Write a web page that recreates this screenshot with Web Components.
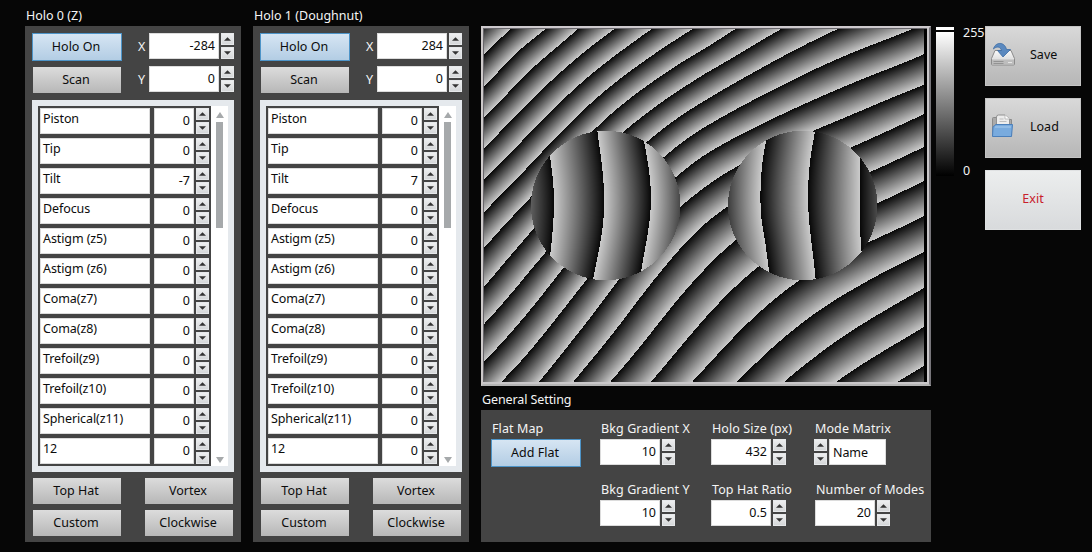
<!DOCTYPE html>
<html lang="en">
<head>
<meta charset="utf-8">
<title>Hologram control</title>
<style>
html,body{margin:0;height:100%;background:#060606;overflow:hidden}
body{font:12.5px/16px "Noto Sans","Open Sans",sans-serif;color:#f4f4f4}
</style>
</head>
<body>
<holo-app></holo-app>
<script>
const define = (name, html, setup) => customElements.define(name, class extends HTMLElement {
  connectedCallback() {
    if (this.shadowRoot) return;
    const t = document.createElement('template');
    t.innerHTML = typeof html === 'function' ? html(this) : html;
    this.attachShadow({mode: 'open'}).append(t.content.cloneNode(true));
    if (setup) setup(this, this.shadowRoot);
  }
});

define('ui-spin', `<style>
:host{display:grid;grid-template-rows:12px 12px;gap:2px;width:13px;height:26px;flex:none}
span{background:linear-gradient(#f0f1f2,#d3d5d7);display:grid;place-items:center;box-shadow:inset 0 0 0 1px #e6e8ea}
svg{display:block}
</style>
<span><svg width="7" height="4"><path d="M0 3.8 3.5.2 7 3.8z" fill="#333"/></svg></span>
<span><svg width="7" height="4"><path d="M0 .2 3.5 3.8 7 .2z" fill="#333"/></svg></span>`);

define('ui-box', `<style>
:host{display:flex;align-items:center;justify-content:flex-end;box-sizing:border-box;height:26px;padding:0 3px 1px 2px;background:#fff;color:#0c0c0c;border:1px solid #dcdcdc;white-space:nowrap}
:host([left]){justify-content:flex-start;padding:0 2px 5px;letter-spacing:-.1px}
:host([value]){padding:0 3px 0 0}
</style><slot></slot>`);

define('ui-number', `<style>
:host{display:flex;gap:2px}
ui-box{width:var(--w,60px)}
</style><ui-box><slot></slot></ui-box><ui-spin></ui-spin>`);

define('ui-button', `<style>
:host{display:flex;align-items:center;justify-content:center;box-sizing:border-box;width:88px;height:26px;margin:0 1px;padding-right:2px;background:linear-gradient(#dcdcdc,#b7b7b7);color:#0c0c0c;white-space:nowrap}
:host([on]){width:90px;height:28px;margin:0;background:linear-gradient(#d6e5f3,#b3cde4);border:1px solid #4d94c8}
</style><slot></slot>`);

define('mode-row', `<style>
:host{display:grid;grid-template-columns:110px 40px 13px;column-gap:4px;height:26px}
ui-spin{margin-left:-2px}
</style><ui-box left><slot></slot></ui-box><ui-box value><slot name="value"></slot></ui-box><ui-spin></ui-spin>`);

define('mode-list', `<style>
:host{display:grid;grid-template-columns:173px 17px;box-sizing:border-box;width:202px;height:372px;padding:6px;background:#e5e9ed}
.rows{background:#444;padding:2px;display:grid;grid-auto-rows:26px;row-gap:4px;height:356px}
.bar{background:#fff;display:flex;flex-direction:column;align-items:center;padding:6px 0 3px}
i{width:7px;height:106px;background:#a6a9ab;margin-top:4px}
b{flex:1}
svg{display:block}
</style><div class="rows"><slot></slot></div>
<div class="bar"><svg width="8" height="6"><path d="M0 6 4 0l4 6z" fill="#a6a9ab"/></svg><i></i><b></b><svg width="8" height="6"><path d="M0 0 4 6l4-6z" fill="#a6a9ab"/></svg></div>`);

const modes = ['Piston','Tip','Tilt','Defocus','Astigm (z5)','Astigm (z6)','Coma(z7)','Coma(z8)','Trefoil(z9)','Trefoil(z10)','Spherical(z11)','12'];
define('holo-panel', el => `<style>
:host{display:block;width:216px}
h2{font:inherit;margin:0 0 2px 1px;height:16px;white-space:nowrap}
.panel{background:#444;height:516px;box-sizing:border-box;padding:7px;display:flex;flex-direction:column}
.top{display:grid;grid-template-columns:90px 27px auto;height:67px;grid-template-rows:33px 34px}
.top span{padding-left:16px;line-height:27px}
.foot{display:grid;grid-template-columns:90px 90px;justify-content:space-between;row-gap:6px;padding-top:6px}
ui-number{--w:70px}
</style>
<h2>${el.getAttribute('label')}</h2>
<div class="panel">
<div class="top"><ui-button on>Holo On</ui-button><span>X</span><ui-number>${el.getAttribute('x')}</ui-number>
<ui-button style="margin-top:1px">Scan</ui-button><span>Y</span><ui-number>0</ui-number></div>
<mode-list>${modes.map((m, i) => `<mode-row>${m}<span slot="value">${i === 2 ? el.getAttribute('tilt') : 0}</span></mode-row>`).join('')}</mode-list>
<div class="foot"><ui-button>Top Hat</ui-button><ui-button>Vortex</ui-button><ui-button>Custom</ui-button><ui-button>Clockwise</ui-button></div>
</div>`);

define('ui-field', el => `<style>
:host{display:block}
label{display:block;box-sizing:border-box;height:19px;padding-top:1px;margin-left:1px;white-space:nowrap;letter-spacing:.1px}
</style><label>${el.getAttribute('label')}</label><slot></slot>`);

define('general-settings', `<style>
:host{display:block;width:450px}
h2{font:inherit;margin:0 0 2px 1px;height:16px;letter-spacing:-.1px}
.panel{height:132px;box-sizing:border-box;background:#444;padding:10px 0 0 10px;display:grid;grid-template-columns:109px 111px 103px 1fr;grid-auto-rows:61px}
.matrix{display:flex;gap:2px}
.matrix ui-box{width:57px}
</style>
<h2>General Setting</h2>
<div class="panel">
<ui-field label="Flat Map"><ui-button on>Add Flat</ui-button></ui-field>
<ui-field label="Bkg Gradient X"><ui-number>10</ui-number></ui-field>
<ui-field label="Holo Size (px)"><ui-number>432</ui-number></ui-field>
<ui-field label="Mode Matrix"><div class="matrix"><ui-spin></ui-spin><ui-box left style="padding:1px 3px 0">Name</ui-box></div></ui-field>
<span></span>
<ui-field label="Bkg Gradient Y"><ui-number>10</ui-number></ui-field>
<ui-field label="Top Hat Ratio"><ui-number>0.5</ui-number></ui-field>
<ui-field label="Number of Modes" style="margin-left:1px"><ui-number>20</ui-number></ui-field>
</div>`);

define('gray-scale', `<style>
:host{display:grid;grid-template-columns:18px auto;column-gap:9px;height:150px}
.bar{border-top:3px solid #fff;padding-top:2px}
.bar i{display:block;height:144px;background:linear-gradient(#fff,#000)}
.marks{display:flex;flex-direction:column;justify-content:space-between;margin:-2px 0 -2px}
</style><div class="bar"><i></i></div><div class="marks"><span>255</span><span>0</span></div>`);

define('tool-button', `<style>
:host{display:grid;grid-template-columns:26px 1fr;column-gap:5px;align-items:center;box-sizing:border-box;width:96px;height:60px;padding:0 0 2px 5px;background:linear-gradient(#d9d9d9,#b6b6b6);color:#0c0c0c;box-shadow:inset 0 0 0 1px #c4c4c4}
:host([exit]){background:linear-gradient(#eceeee,#d8dadc);color:#c8202c;grid-template-columns:1fr;padding:0 0 2px;text-align:center;box-shadow:inset 0 0 0 1px #dfe1e2}
.t{padding-left:9px}
:host([exit]) .t{padding:0}
</style><slot name="icon"></slot><span class="t"><slot></slot></span>`);

// Control points of the background fringes: [x, y, fringe order].
const bg = [
[484,55,0],[512,28,0],[484,87,1],[547,28,1],[516,53,1],[484,117,2],[579,28,2],[484,148,3],[616,28,3],[484,180,4],[653,28,4],
[484,212,5],[694,28,5],[484,248,6],[531,197,6],[594,130,6],[706,48,6],[737,28,6],[484,287,7],[534,228,7],[623,132,7],[706,73,7],[783,28,7],
[484,324,8],[547,251,8],[647,142,8],[706,100,8],[840,28,8],[484,362,9],[563,268,9],[664,157,9],[700,130,9],[915,28,9],
[501,382,10],[588,278,10],[676,177,10],[700,158,10],[924,54,10],[539,382,11],[619,279,11],[680,207,11],[700,191,11],[738,166,11],[815,130,11],[924,85,11],
[573,382,12],[706,223,12],[727,207,12],[852,147,12],[924,114,12],[610,382,13],[706,268,13],[736,240,13],[870,172,13],[924,147,13],
[651,382,14],[706,317,14],[758,267,14],[878,203,14],[924,181,14],[692,382,15],[706,367,15],[800,280,15],[867,243,15],[924,216,15],
[737,382,16],[857,287,16],[924,252,16],[784,382,17],[924,288,17],[836,382,18],[924,327,18],[897,382,19],[924,366,19],[815,357,17]];
const left = [
[550,157,1],[553,180,1],[554,205,1],[553,225,1],[550,257,1],[597.5,132,2],[601,157,2],[603.5,183,2],[604,205,2],[603,225,2],[599,250,2],[593,279,2],
[644,142,3],[648,163,3],[651,195,3],[650,217,3],[646,243,3],[641,271,3]];
const right = [
[766,142,1],[763,157,1],[761,180,1],[760.5,205,1],[761.5,220,1],[765,240,1],[769,271,1],[815,132,2],[811.5,150,2],[809,172,2],[808,200,2],[809,220,2],[811.5,243,2],[815.5,278,2],
[860,158,3],[860,180,3],[860,207,3],[860,230,3],[861.5,250,3]];

// Smoothed thin-plate spline through the control points.
function spline(points, lambda) {
  const P = points.map(p => [(p[0]-700)/200, (p[1]-205)/200, p[2]]), n = P.length, N = n + 3;
  const U = r2 => r2 < 1e-12 ? 0 : r2 * Math.log(r2);
  const A = P.map((p, i) => [...P.map((q, j) => i === j ? lambda : U((p[0]-q[0])**2 + (p[1]-q[1])**2)), 1, p[0], p[1], p[2]]);
  for (let k = 0; k < 3; k++) A.push([...P.map(p => k ? p[k-1] : 1), 0, 0, 0, 0]);
  for (let c = 0; c < N; c++) {
    let m = c;
    for (let r = c; r < N; r++) if (Math.abs(A[r][c]) > Math.abs(A[m][c])) m = r;
    [A[c], A[m]] = [A[m], A[c]];
    for (let r = 0; r < N; r++) if (r !== c) {
      const f = A[r][c] / A[c][c];
      if (f) for (let k = c; k <= N; k++) A[r][k] -= f * A[c][k];
    }
  }
  const w = A.map((row, i) => row[N] / row[i]);
  return (x, y) => {
    x = (x-700)/200; y = (y-205)/200;
    let s = w[n] + w[n+1]*x + w[n+2]*y;
    for (let i = 0; i < n; i++) s += w[i] * U((x-P[i][0])**2 + (y-P[i][1])**2);
    return s;
  };
}

define('phase-map', `<style>
:host{display:block;box-sizing:border-box;width:450px;height:360px;border:2px solid;border-color:#cdc9cd #77757a #b5b5b5 #cdc9c9;padding:1px;background:#67656a;box-shadow:inset -2px -2px #c9c7c9}
canvas{display:block;border-right:3px solid #000}
</style><canvas width="440" height="353"></canvas>`, (el, root) => {
  const ctx = root.querySelector('canvas').getContext('2d');
  const img = ctx.createImageData(440, 353);
  const fb = spline(bg, .01), fl = spline(left, .01), fr = spline(right, .01);
  for (let j = 0; j < 353; j++) for (let i = 0; i < 440; i++) {
    const x = i + 484.5, y = j + 29.5;
    let v;
    const inL = Math.hypot(x-605.7, y-205.5) < 74.7, inR = Math.hypot(x-802.7, y-205.5) < 74.7;
    if (inL) { v = fl(x, y); v = 1 - (v - Math.floor(v)); }
    else { v = inR ? fr(x, y) : fb(x, y); v -= Math.floor(v); }
    const g = 8 + v * 194, o = (j*440 + i) * 4;
    img.data[o] = img.data[o+1] = img.data[o+2] = g; img.data[o+3] = 255;
  }
  ctx.putImageData(img, 0, 0);
});

define('holo-app', `<style>
:host{display:flex;align-items:flex-start;box-sizing:border-box;width:1092px;height:552px;padding:8px 0 0 25px}
holo-panel{margin-right:12px}
.center{padding-top:18px;display:flex;flex-direction:column;gap:6px}
gray-scale{margin:19px 0 0 5px;width:49px}
.tools{display:flex;flex-direction:column;gap:12px;padding-top:18px}
svg{display:block}
</style>
<holo-panel label="Holo 0 (Z)" x="-284" tilt="-7"></holo-panel>
<holo-panel label="Holo 1 (Doughnut)" x="284" tilt="7"></holo-panel>
<div class="center"><phase-map></phase-map><general-settings></general-settings></div>
<gray-scale></gray-scale>
<div class="tools">
<tool-button><svg slot="icon" width="26" height="26" viewBox="0 0 26 26">
<defs><linearGradient id="d" x2="0" y2="1"><stop stop-color="#fafafa"/><stop offset="1" stop-color="#cfcfcf"/></linearGradient></defs>
<path d="M5 8.500h16l3.500 8v5.500q0 1-1 1h-21q-1 0-1-1V16.500z" fill="url(#d)" stroke="#8b8b8b"/>
<path d="M2 17.500h22V22.500H2z" fill="#bdbdbd"/><path d="M3.500 19.500h10M3.500 21.500h10" stroke="#939393"/><path d="M18 20.500h4" stroke="#e6e6e6"/>
<path d="M3.500 7C5 0 14.500-1 16.500 7.500h4L13 15 7.500 8.500h4C10.500 4.500 6.500 4 3.500 7z" fill="#5b89bf" stroke="#3c6ca4" stroke-width=".8"/></svg>Save</tool-button>
<tool-button><svg slot="icon" width="26" height="26" viewBox="0 0 26 26">
<path d="M2.500 22V4.500q0-1 1-1H8l1 2h12.500V22z" fill="#aaa" stroke="#8b8b8b"/>
<path d="M6.500 15V3q0-2 2-2h6.500l4.500 4V15z" fill="#ececec" stroke="#929292"/><path d="M9.500 5h4M9.500 7.500h7" stroke="#bebebe"/><path d="M15 1v4h4.500" fill="#fff" stroke="#aaa" stroke-width=".7"/>
<path d="M5.500 10.500h17l-1 12H2.500L3 13q0-1 1.500-1z" fill="#79abde" stroke="#4a7fbb"/><path d="M5 13h16" stroke="#a8cbed"/></svg>Load</tool-button>
<tool-button exit>Exit</tool-button>
</div>`);
</script>
</body>
</html>
